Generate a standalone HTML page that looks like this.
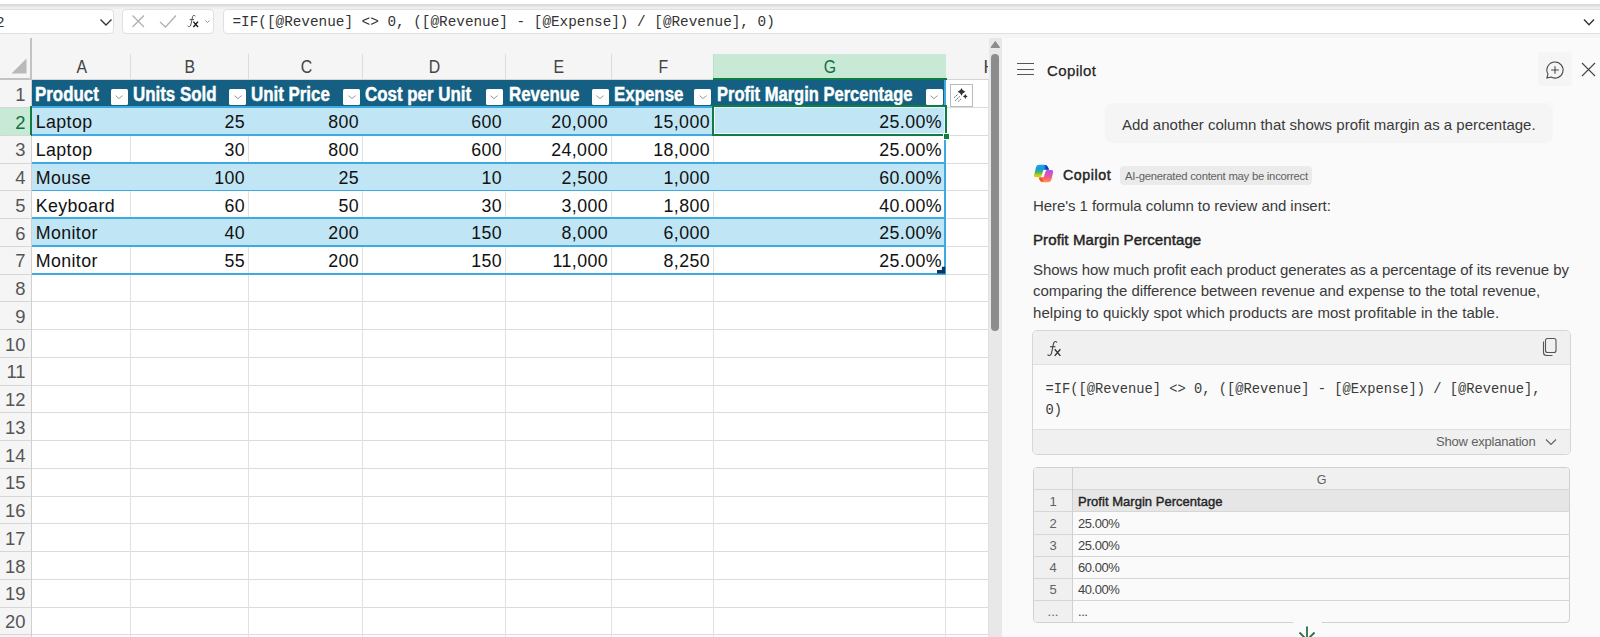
<!DOCTYPE html>
<html lang="en"><head><meta charset="utf-8"><title>Excel Copilot</title>
<style>
*{box-sizing:border-box;margin:0;padding:0}
html,body{width:1600px;height:637px;overflow:hidden;background:#f5f5f5;font-family:"Liberation Sans",sans-serif}
.abs,.abs *{position:absolute}
#root{position:relative;width:1600px;height:637px;overflow:hidden}
#root div,#root span,#root svg{position:absolute}
.topwhite{left:0;top:0;width:1600px;height:4px;background:#fff}
.topline{left:0;top:3.8px;width:1600px;height:5.6px;background:linear-gradient(#dadada 0,#dedede 42%,#ececec 55%,#efefef 100%)}
.box{background:#fff;border:1px solid #e0e0e0;border-radius:4px;top:9px;height:25px}
.ftext{left:232.5px;top:12px;height:21px;line-height:21px;font-family:"Liberation Mono",monospace;font-size:14.35px;color:#333;white-space:pre}
.colh{top:54px;height:24px;line-height:26px;text-align:center;font-size:17.6px;color:#444;padding-left:2.5px}
.colh span{position:static!important;display:inline-block;transform:scaleX(.9)}
.rowh{left:0;width:31px;text-align:right;padding-right:5.5px;font-size:18.4px;color:#555;height:27px;line-height:28px;margin-top:.8px}
.vl{width:1px;background:#e1e1e1}
.hl{height:1px;background:#e1e1e1}
.cell{font-size:17.8px;color:#111;height:26px;line-height:28px;white-space:nowrap;letter-spacing:.4px;margin-top:.6px}
.hd{font-size:19.6px;font-weight:bold;color:#fff;white-space:nowrap;height:26px;line-height:27px;transform-origin:0 50%;transform:scaleX(.862);-webkit-text-stroke:.45px #fff;margin-top:-.2px}
.fb{width:17px;height:16.6px;background:#fff;border-radius:1.5px;top:88.5px}
#panel{left:1002px;top:34px;width:598px;height:603px;background:#fafafa;font-family:"Liberation Sans",sans-serif;color:#333}
.pt{white-space:nowrap;font-size:14.6px;color:#3a3a3a;line-height:20px;height:20px;margin-top:.6px}
</style></head><body><div id="root">
<div class="topwhite"></div><div class="topline"></div>

<div class="box" style="left:-6px;width:120px"></div>
<span style="left:-4px;top:11px;font-size:15px;line-height:21px;color:#333">2</span>
<svg style="left:98.5px;top:17.3px" width="14" height="10" viewBox="0 0 14 10"><path d="M1.5 2.5 L7 8 L12.5 2.5" fill="none" stroke="#333" stroke-width="1.4"/></svg>
<div class="box" style="left:122px;width:92px"></div>
<svg style="left:130px;top:13px" width="84" height="17" viewBox="0 0 84 17"><path d="M2.5 2.5 L14 14 M14 2.5 L2.5 14" stroke="#b0b0b0" stroke-width="1.3" fill="none"/><path d="M30 9 L35.5 14 L46 2.5" stroke="#b0b0b0" stroke-width="1.3" fill="none"/><path d="M75.5 7.5 L77.5 9.5 L79.5 7.5" stroke="#9a9a9a" stroke-width="1" fill="none"/></svg>
<svg style="left:186px;top:13px" width="14" height="16" viewBox="186 13 14 16"><path d="M195.2 16.3 C195 15.2 193.2 14.8 192.6 16.6 L190.8 25 C190.4 26.9 188.6 27 187.6 26" fill="none" stroke="#555" stroke-width="1"/><path d="M189.6 19.6 H194" stroke="#555" stroke-width="1" fill="none"/><path d="M193.4 21.6 L198 27 M198 21.6 L193.4 27" stroke="#1a1a1a" stroke-width="1.4" fill="none"/></svg>
<div class="box" style="left:223px;width:1384px"></div>
<span class="ftext">=IF([@Revenue] &lt;&gt; 0, ([@Revenue] - [@Expense]) / [@Revenue], 0)</span>
<svg style="left:1581.8px;top:16.8px" width="14" height="10" viewBox="0 0 14 10"><path d="M2 2.5 L7 7.7 L12 2.5" fill="none" stroke="#333" stroke-width="1.4"/></svg>
<div style="left:32px;top:80px;width:957px;height:557px;background:#fff"></div>
<div style="left:30px;top:38px;width:2px;height:42px;background:#c3c3c3"></div>
<div style="left:0;top:78px;width:32px;height:2px;background:#c3c3c3"></div>
<svg style="left:11px;top:58px" width="16" height="16" viewBox="0 0 16 16"><path d="M15.5 0.5 L15.5 15.5 L0.5 15.5 Z" fill="#b9b9b9"/></svg>
<div style="left:32px;top:79px;width:957px;height:1px;background:#d4d4d4"></div>
<div class="colh" style="left:32px;width:98px"><span>A</span></div>
<div class="colh" style="left:130px;width:118px"><span>B</span></div>
<div class="vl" style="left:130px;top:54px;height:25px;background:#dcdcdc"></div>
<div class="colh" style="left:248px;width:114px"><span>C</span></div>
<div class="vl" style="left:248px;top:54px;height:25px;background:#dcdcdc"></div>
<div class="colh" style="left:362px;width:143px"><span>D</span></div>
<div class="vl" style="left:362px;top:54px;height:25px;background:#dcdcdc"></div>
<div class="colh" style="left:505px;width:106px"><span>E</span></div>
<div class="vl" style="left:505px;top:54px;height:25px;background:#dcdcdc"></div>
<div class="colh" style="left:611px;width:102px"><span>F</span></div>
<div class="vl" style="left:611px;top:54px;height:25px;background:#dcdcdc"></div>
<div style="left:713px;top:54px;width:233px;height:24px;background:#c9e9d7"></div>
<div style="left:713px;top:54px;width:1px;height:24px;background:#b9e0cb"></div>
<div style="left:713px;top:78px;width:234px;height:2px;background:#107c41"></div>
<div class="colh" style="left:713px;width:232px;color:#0e703a"><span>G</span></div>
<div style="left:984px;top:54px;width:4.4px;height:24px;overflow:hidden"><span style="left:-.5px;top:0;font-size:17.6px;line-height:26px;color:#444">H</span></div>
<div style="left:31px;top:80px;width:1px;height:557px;background:#d0d0d0"></div>
<div class="rowh" style="top:80.0px;">1</div>
<div class="hl" style="left:0;top:107.15px;width:31px;background:#d6d6d6"></div>
<div style="left:0;top:107.75px;width:30px;height:27.75px;background:#c9e9d7"></div>
<div style="left:30px;top:105.75px;width:2px;height:29.75px;background:#107c41"></div>
<div class="rowh" style="top:107.75px;color:#0e703a;">2</div>
<div class="hl" style="left:0;top:134.90px;width:31px;background:#d6d6d6"></div>
<div class="rowh" style="top:135.5px;">3</div>
<div class="hl" style="left:0;top:162.65px;width:31px;background:#d6d6d6"></div>
<div class="rowh" style="top:163.25px;">4</div>
<div class="hl" style="left:0;top:190.40px;width:31px;background:#d6d6d6"></div>
<div class="rowh" style="top:191.0px;">5</div>
<div class="hl" style="left:0;top:218.15px;width:31px;background:#d6d6d6"></div>
<div class="rowh" style="top:218.75px;">6</div>
<div class="hl" style="left:0;top:245.90px;width:31px;background:#d6d6d6"></div>
<div class="rowh" style="top:246.5px;">7</div>
<div class="hl" style="left:0;top:273.65px;width:31px;background:#d6d6d6"></div>
<div class="rowh" style="top:274.25px;">8</div>
<div class="hl" style="left:0;top:301.40px;width:31px;background:#d6d6d6"></div>
<div class="rowh" style="top:302.0px;">9</div>
<div class="hl" style="left:0;top:329.15px;width:31px;background:#d6d6d6"></div>
<div class="rowh" style="top:329.75px;">10</div>
<div class="hl" style="left:0;top:356.90px;width:31px;background:#d6d6d6"></div>
<div class="rowh" style="top:357.5px;">11</div>
<div class="hl" style="left:0;top:384.65px;width:31px;background:#d6d6d6"></div>
<div class="rowh" style="top:385.25px;">12</div>
<div class="hl" style="left:0;top:412.40px;width:31px;background:#d6d6d6"></div>
<div class="rowh" style="top:413.0px;">13</div>
<div class="hl" style="left:0;top:440.15px;width:31px;background:#d6d6d6"></div>
<div class="rowh" style="top:440.75px;">14</div>
<div class="hl" style="left:0;top:467.90px;width:31px;background:#d6d6d6"></div>
<div class="rowh" style="top:468.5px;">15</div>
<div class="hl" style="left:0;top:495.65px;width:31px;background:#d6d6d6"></div>
<div class="rowh" style="top:496.25px;">16</div>
<div class="hl" style="left:0;top:523.40px;width:31px;background:#d6d6d6"></div>
<div class="rowh" style="top:524.0px;">17</div>
<div class="hl" style="left:0;top:551.15px;width:31px;background:#d6d6d6"></div>
<div class="rowh" style="top:551.75px;">18</div>
<div class="hl" style="left:0;top:578.90px;width:31px;background:#d6d6d6"></div>
<div class="rowh" style="top:579.5px;">19</div>
<div class="hl" style="left:0;top:606.65px;width:31px;background:#d6d6d6"></div>
<div class="rowh" style="top:607.25px;">20</div>
<div class="hl" style="left:0;top:634.40px;width:31px;background:#d6d6d6"></div>
<div class="rowh" style="top:635.0px;">21</div>
<div class="hl" style="left:0;top:662.15px;width:31px;background:#d6d6d6"></div>
<div class="hl" style="left:32px;top:107.15px;width:957px;background:#dcdcdc"></div>
<div class="hl" style="left:32px;top:134.90px;width:957px;background:#dcdcdc"></div>
<div class="hl" style="left:32px;top:162.65px;width:957px;background:#dcdcdc"></div>
<div class="hl" style="left:32px;top:190.40px;width:957px;background:#dcdcdc"></div>
<div class="hl" style="left:32px;top:218.15px;width:957px;background:#dcdcdc"></div>
<div class="hl" style="left:32px;top:245.90px;width:957px;background:#dcdcdc"></div>
<div class="hl" style="left:32px;top:273.65px;width:957px;background:#dcdcdc"></div>
<div class="hl" style="left:32px;top:301.40px;width:957px;background:#dcdcdc"></div>
<div class="hl" style="left:32px;top:329.15px;width:957px;background:#dcdcdc"></div>
<div class="hl" style="left:32px;top:356.90px;width:957px;background:#dcdcdc"></div>
<div class="hl" style="left:32px;top:384.65px;width:957px;background:#dcdcdc"></div>
<div class="hl" style="left:32px;top:412.40px;width:957px;background:#dcdcdc"></div>
<div class="hl" style="left:32px;top:440.15px;width:957px;background:#dcdcdc"></div>
<div class="hl" style="left:32px;top:467.90px;width:957px;background:#dcdcdc"></div>
<div class="hl" style="left:32px;top:495.65px;width:957px;background:#dcdcdc"></div>
<div class="hl" style="left:32px;top:523.40px;width:957px;background:#dcdcdc"></div>
<div class="hl" style="left:32px;top:551.15px;width:957px;background:#dcdcdc"></div>
<div class="hl" style="left:32px;top:578.90px;width:957px;background:#dcdcdc"></div>
<div class="hl" style="left:32px;top:606.65px;width:957px;background:#dcdcdc"></div>
<div class="hl" style="left:32px;top:634.40px;width:957px;background:#dcdcdc"></div>
<div class="hl" style="left:32px;top:662.15px;width:957px;background:#dcdcdc"></div>
<div class="vl" style="left:130px;top:80px;height:557px"></div>
<div class="vl" style="left:248px;top:80px;height:557px"></div>
<div class="vl" style="left:362px;top:80px;height:557px"></div>
<div class="vl" style="left:505px;top:80px;height:557px"></div>
<div class="vl" style="left:611px;top:80px;height:557px"></div>
<div class="vl" style="left:713px;top:80px;height:557px"></div>
<div class="vl" style="left:945px;top:80px;height:557px"></div>
<div class="vl" style="left:988px;top:80px;height:557px"></div>
<div style="left:32px;top:80px;width:913px;height:27px;background:#156082"></div>
<div class="hd" style="left:35px;top:81px">Product</div>
<div class="fb" style="left:110.5px"></div>
<svg style="left:115.2px;top:95.4px" width="8" height="4.5" viewBox="0 0 8 4.5"><path d="M0.5 0.6 L4 3.6 L7.5 0.6" fill="none" stroke="#9a9a9a" stroke-width="1"/></svg>
<div class="hd" style="left:133px;top:81px">Units Sold</div>
<div class="fb" style="left:229px"></div>
<svg style="left:233.7px;top:95.4px" width="8" height="4.5" viewBox="0 0 8 4.5"><path d="M0.5 0.6 L4 3.6 L7.5 0.6" fill="none" stroke="#9a9a9a" stroke-width="1"/></svg>
<div class="hd" style="left:251px;top:81px">Unit Price</div>
<div class="fb" style="left:343.3px"></div>
<svg style="left:348.0px;top:95.4px" width="8" height="4.5" viewBox="0 0 8 4.5"><path d="M0.5 0.6 L4 3.6 L7.5 0.6" fill="none" stroke="#9a9a9a" stroke-width="1"/></svg>
<div class="hd" style="left:365px;top:81px">Cost per Unit</div>
<div class="fb" style="left:485.7px"></div>
<svg style="left:490.4px;top:95.4px" width="8" height="4.5" viewBox="0 0 8 4.5"><path d="M0.5 0.6 L4 3.6 L7.5 0.6" fill="none" stroke="#9a9a9a" stroke-width="1"/></svg>
<div class="hd" style="left:508.5px;top:81px">Revenue</div>
<div class="fb" style="left:591.5px"></div>
<svg style="left:596.2px;top:95.4px" width="8" height="4.5" viewBox="0 0 8 4.5"><path d="M0.5 0.6 L4 3.6 L7.5 0.6" fill="none" stroke="#9a9a9a" stroke-width="1"/></svg>
<div class="hd" style="left:614px;top:81px">Expense</div>
<div class="fb" style="left:694.2px"></div>
<svg style="left:698.9000000000001px;top:95.4px" width="8" height="4.5" viewBox="0 0 8 4.5"><path d="M0.5 0.6 L4 3.6 L7.5 0.6" fill="none" stroke="#9a9a9a" stroke-width="1"/></svg>
<div class="hd" style="left:717.2px;top:81px;transform:scaleX(.843)">Profit Margin Percentage</div>
<div class="fb" style="left:925.7px"></div>
<svg style="left:930.4000000000001px;top:95.4px" width="8" height="4.5" viewBox="0 0 8 4.5"><path d="M0.5 0.6 L4 3.6 L7.5 0.6" fill="none" stroke="#9a9a9a" stroke-width="1"/></svg>
<div style="left:32px;top:107.75px;width:913px;height:27.75px;background:#c0e6f5"></div>
<div class="cell" style="left:35.7px;top:107.75px">Laptop</div>
<div class="cell" style="left:130px;width:115px;top:107.75px;text-align:right">25</div>
<div class="cell" style="left:248px;width:111px;top:107.75px;text-align:right">800</div>
<div class="cell" style="left:362px;width:140px;top:107.75px;text-align:right">600</div>
<div class="cell" style="left:505px;width:103px;top:107.75px;text-align:right">20,000</div>
<div class="cell" style="left:611px;width:99px;top:107.75px;text-align:right">15,000</div>
<div class="cell" style="left:713px;width:229px;top:107.75px;text-align:right">25.00%</div>
<div style="left:32px;top:135.5px;width:913px;height:27.75px;background:#fff"></div>
<div class="vl" style="left:130px;top:135.5px;height:27.75px"></div>
<div class="vl" style="left:248px;top:135.5px;height:27.75px"></div>
<div class="vl" style="left:362px;top:135.5px;height:27.75px"></div>
<div class="vl" style="left:505px;top:135.5px;height:27.75px"></div>
<div class="vl" style="left:611px;top:135.5px;height:27.75px"></div>
<div class="vl" style="left:713px;top:135.5px;height:27.75px"></div>
<div class="cell" style="left:35.7px;top:135.5px">Laptop</div>
<div class="cell" style="left:130px;width:115px;top:135.5px;text-align:right">30</div>
<div class="cell" style="left:248px;width:111px;top:135.5px;text-align:right">800</div>
<div class="cell" style="left:362px;width:140px;top:135.5px;text-align:right">600</div>
<div class="cell" style="left:505px;width:103px;top:135.5px;text-align:right">24,000</div>
<div class="cell" style="left:611px;width:99px;top:135.5px;text-align:right">18,000</div>
<div class="cell" style="left:713px;width:229px;top:135.5px;text-align:right">25.00%</div>
<div style="left:32px;top:163.25px;width:913px;height:27.75px;background:#c0e6f5"></div>
<div class="cell" style="left:35.7px;top:163.25px">Mouse</div>
<div class="cell" style="left:130px;width:115px;top:163.25px;text-align:right">100</div>
<div class="cell" style="left:248px;width:111px;top:163.25px;text-align:right">25</div>
<div class="cell" style="left:362px;width:140px;top:163.25px;text-align:right">10</div>
<div class="cell" style="left:505px;width:103px;top:163.25px;text-align:right">2,500</div>
<div class="cell" style="left:611px;width:99px;top:163.25px;text-align:right">1,000</div>
<div class="cell" style="left:713px;width:229px;top:163.25px;text-align:right">60.00%</div>
<div style="left:32px;top:191.0px;width:913px;height:27.75px;background:#fff"></div>
<div class="vl" style="left:130px;top:191.0px;height:27.75px"></div>
<div class="vl" style="left:248px;top:191.0px;height:27.75px"></div>
<div class="vl" style="left:362px;top:191.0px;height:27.75px"></div>
<div class="vl" style="left:505px;top:191.0px;height:27.75px"></div>
<div class="vl" style="left:611px;top:191.0px;height:27.75px"></div>
<div class="vl" style="left:713px;top:191.0px;height:27.75px"></div>
<div class="cell" style="left:35.7px;top:191.0px">Keyboard</div>
<div class="cell" style="left:130px;width:115px;top:191.0px;text-align:right">60</div>
<div class="cell" style="left:248px;width:111px;top:191.0px;text-align:right">50</div>
<div class="cell" style="left:362px;width:140px;top:191.0px;text-align:right">30</div>
<div class="cell" style="left:505px;width:103px;top:191.0px;text-align:right">3,000</div>
<div class="cell" style="left:611px;width:99px;top:191.0px;text-align:right">1,800</div>
<div class="cell" style="left:713px;width:229px;top:191.0px;text-align:right">40.00%</div>
<div style="left:32px;top:218.75px;width:913px;height:27.75px;background:#c0e6f5"></div>
<div class="cell" style="left:35.7px;top:218.75px">Monitor</div>
<div class="cell" style="left:130px;width:115px;top:218.75px;text-align:right">40</div>
<div class="cell" style="left:248px;width:111px;top:218.75px;text-align:right">200</div>
<div class="cell" style="left:362px;width:140px;top:218.75px;text-align:right">150</div>
<div class="cell" style="left:505px;width:103px;top:218.75px;text-align:right">8,000</div>
<div class="cell" style="left:611px;width:99px;top:218.75px;text-align:right">6,000</div>
<div class="cell" style="left:713px;width:229px;top:218.75px;text-align:right">25.00%</div>
<div style="left:32px;top:246.5px;width:913px;height:27.75px;background:#fff"></div>
<div class="vl" style="left:130px;top:246.5px;height:27.75px"></div>
<div class="vl" style="left:248px;top:246.5px;height:27.75px"></div>
<div class="vl" style="left:362px;top:246.5px;height:27.75px"></div>
<div class="vl" style="left:505px;top:246.5px;height:27.75px"></div>
<div class="vl" style="left:611px;top:246.5px;height:27.75px"></div>
<div class="vl" style="left:713px;top:246.5px;height:27.75px"></div>
<div class="cell" style="left:35.7px;top:246.5px">Monitor</div>
<div class="cell" style="left:130px;width:115px;top:246.5px;text-align:right">55</div>
<div class="cell" style="left:248px;width:111px;top:246.5px;text-align:right">200</div>
<div class="cell" style="left:362px;width:140px;top:246.5px;text-align:right">150</div>
<div class="cell" style="left:505px;width:103px;top:246.5px;text-align:right">11,000</div>
<div class="cell" style="left:611px;width:99px;top:246.5px;text-align:right">8,250</div>
<div class="cell" style="left:713px;width:229px;top:246.5px;text-align:right">25.00%</div>
<div style="left:32px;top:106.45px;width:913.8px;height:1.8px;background:#3dabe2"></div>
<div style="left:32px;top:134.20px;width:913.8px;height:1.8px;background:#3dabe2"></div>
<div style="left:32px;top:161.95px;width:913.8px;height:1.8px;background:#3dabe2"></div>
<div style="left:32px;top:189.70px;width:913.8px;height:1.8px;background:#3dabe2"></div>
<div style="left:32px;top:217.45px;width:913.8px;height:1.8px;background:#3dabe2"></div>
<div style="left:32px;top:245.20px;width:913.8px;height:1.8px;background:#3dabe2"></div>
<div style="left:32px;top:272.95px;width:913.8px;height:1.8px;background:#3dabe2"></div>
<div style="left:943.8px;top:80px;width:2px;height:194.25px;background:#3dabe2"></div>
<div style="left:712px;top:105px;width:235px;height:31.2px;border:2.2px solid #107c41;box-shadow:inset 0 0 0 1px rgba(255,255,255,.85)"></div>
<div style="left:943px;top:132.5px;width:7px;height:7px;background:#107c41;border:1px solid #fff"></div>
<svg style="left:936px;top:265px" width="11" height="10" viewBox="936 265 11 10"><path d="M937 270 H941.9 V266.8 H945.2 V273.6 H937 Z" fill="#0b3563"/></svg>
<div style="left:950px;top:84px;width:23px;height:23px;background:#fff;border:1px solid #b8bcc0"></div>
<svg style="left:950px;top:84px" width="23" height="23" viewBox="950 84 23 23"><path d="M961.50 87.90 Q962.36 90.94 965.40 91.80 Q962.36 92.66 961.50 95.70 Q960.64 92.66 957.60 91.80 Q960.64 90.94 961.50 87.90 Z" fill="#333"/><path d="M965.30 94.10 Q965.83 95.97 967.70 96.50 Q965.83 97.03 965.30 98.90 Q964.77 97.03 962.90 96.50 Q964.77 95.97 965.30 94.10 Z" fill="#333"/><path d="M954.2 97.7 L958 94.1 M955.2 100.7 L959.9 96.3 M958.2 101.5 L961 98.9" stroke="#444" stroke-width=".9" stroke-dasharray="1.8 .9" fill="none"/></svg>
<div style="left:988.5px;top:37.5px;width:13.5px;height:600px;background:#e8e8e8"></div>
<svg style="left:989.5px;top:40px" width="11" height="9" viewBox="0 0 11 9"><path d="M1 7.5 L5.3 1.4 L9.6 7.5 Z" fill="#8c8c8c" stroke="#8c8c8c" stroke-width="1" stroke-linejoin="round"/></svg>
<div style="left:991px;top:54px;width:7.6px;height:276.5px;background:#8c8c8c;border-radius:4px"></div>
<div style="left:1002px;top:38px;width:598px;height:599px;background:#fafafa"></div>
<div style="left:1017px;top:63px;width:17px;height:1px;background:#555"></div>
<div style="left:1017px;top:69px;width:17px;height:1px;background:#555"></div>
<div style="left:1017px;top:74px;width:17px;height:1px;background:#555"></div>
<div class="pt" style="left:1047px;top:60px;font-size:15px;letter-spacing:.38px;color:#242424;-webkit-text-stroke:.25px #242424">Copilot</div>
<div style="left:1538px;top:52px;width:34px;height:34px;background:#f5f5f5;border-radius:4px"></div>
<svg style="left:1544.5px;top:59.5px" width="20" height="20" viewBox="0 0 21 21"><path d="M10.5 2 A8.5 8.5 0 1 1 6.3 17.9 L2 19 L3.1 14.7 A8.5 8.5 0 0 1 10.5 2 Z" fill="none" stroke="#444" stroke-width="1.1"/><path d="M10.5 6.5 V14.5 M6.5 10.5 H14.5" stroke="#444" stroke-width="1.1" fill="none"/></svg>
<svg style="left:1581px;top:62px" width="15" height="15" viewBox="0 0 15 15"><path d="M1 1 L14 14 M14 1 L1 14" stroke="#444" stroke-width="1.1" fill="none"/></svg>
<div style="left:1105px;top:103px;width:448px;height:40px;background:#f5f5f5;border-radius:8px"></div>
<div class="pt" style="left:1122px;top:114px;font-size:15px">Add another column that shows profit margin as a percentage.</div>
<svg style="left:1028px;top:160px" width="32" height="28" viewBox="0 0 32 28">
<defs>
<linearGradient id="g1" gradientUnits="userSpaceOnUse" x1="0" y1="4.7" x2="0" y2="17.3"><stop offset="0" stop-color="#18a8f4"/><stop offset=".3" stop-color="#1a98de"/><stop offset=".58" stop-color="#3cb56c"/><stop offset=".82" stop-color="#c8cc18"/><stop offset="1" stop-color="#f2c800"/></linearGradient>
<linearGradient id="g2" gradientUnits="userSpaceOnUse" x1="0" y1="10.1" x2="0" y2="22.3"><stop offset="0" stop-color="#a45cf6"/><stop offset=".35" stop-color="#dc50b4"/><stop offset=".65" stop-color="#f6607e"/><stop offset="1" stop-color="#ff9a3c"/></linearGradient>
<linearGradient id="g3" gradientUnits="userSpaceOnUse" x1="15.5" y1="0" x2="18.5" y2="0"><stop offset="0" stop-color="#1238c4" stop-opacity="0"/><stop offset="1" stop-color="#1238c4"/></linearGradient>
<linearGradient id="g4" gradientUnits="userSpaceOnUse" x1="15.8" y1="0" x2="13.4" y2="0"><stop offset="0" stop-color="#f2521e" stop-opacity="0"/><stop offset="1" stop-color="#f2521e"/></linearGradient>
<clipPath id="cl"><path d="M8.02 7.13 Q8.60 4.70 11.10 4.70 L16.30 4.70 Q18.80 4.70 19.86 6.96 L20.69 8.71 Q21.20 9.80 20.00 9.80 L16.20 9.80 Q15.40 9.80 15.17 10.57 L13.62 15.86 Q13.20 17.30 11.70 17.30 L8.10 17.30 Q5.60 17.30 6.18 14.87 Z"/></clipPath>
<clipPath id="cr"><path d="M17.54 11.53 Q18.00 10.10 19.50 10.10 L23.10 10.10 Q25.60 10.10 25.04 12.54 L23.36 19.86 Q22.80 22.30 20.30 22.30 L15.30 22.30 Q12.80 22.30 11.76 20.03 L11.10 18.59 Q10.60 17.50 11.80 17.50 L14.80 17.50 Q15.60 17.50 15.85 16.74 Z"/></clipPath>
</defs>
<g clip-path="url(#cr)"><rect x="0" y="0" width="32" height="28" fill="url(#g2)"/><path d="M9 17 H17 L15.8 23 H9 Z" fill="url(#g4)"/></g>
<g clip-path="url(#cl)"><rect x="0" y="0" width="32" height="28" fill="url(#g1)"/><path d="M15.5 4 H23 V10.2 H15.5 Z" fill="url(#g3)"/></g>
</svg>
<div class="pt" style="left:1063px;top:164px;font-size:14.2px;letter-spacing:.6px;color:#242424;-webkit-text-stroke:.45px #242424">Copilot</div>
<div style="left:1120px;top:166px;width:192px;height:19px;background:#ebebeb;border-radius:4px"></div>
<div class="pt" style="left:1125px;top:166px;font-size:11.3px;letter-spacing:-.25px;color:#616161;line-height:19px;height:19px">AI-generated content may be incorrect</div>
<div class="pt" style="left:1033px;top:195px;font-size:15px;letter-spacing:-.06px">Here&#39;s 1 formula column to review and insert:</div>
<div class="pt" style="left:1033px;top:229px;font-size:15px;letter-spacing:.1px;color:#242424;-webkit-text-stroke:.45px #242424">Profit Margin Percentage</div>
<div class="pt" style="left:1033px;top:259.4px;font-size:15px;letter-spacing:-.09px">Shows how much profit each product generates as a percentage of its revenue by</div>
<div class="pt" style="left:1033px;top:280.5px;font-size:15px;letter-spacing:-.05px">comparing the difference between revenue and expense to the total revenue,</div>
<div class="pt" style="left:1033px;top:302px;font-size:15px;letter-spacing:.06px">helping to quickly spot which products are most profitable in the table.</div>
<div style="left:1032px;top:330px;width:539px;height:125px;background:#fafafa;border:1px solid #d6d6d6;border-radius:5px;overflow:hidden"><div style="left:0;top:0;width:537px;height:34px;background:#f0f0f0;border-bottom:1px solid #e0e0e0"></div><div style="left:0;top:98px;width:537px;height:25px;background:#f0f0f0;border-top:1px solid #e0e0e0"></div></div>
<svg style="left:1045.3px;top:337.5px" width="17.4" height="19.3" viewBox="185.6 12.6 14 15.5"><path d="M195.2 16.3 C195 15.2 193.2 14.8 192.6 16.6 L190.8 25 C190.4 26.9 188.6 27 187.6 26" fill="none" stroke="#444" stroke-width=".9"/><path d="M189.6 19.6 H194" stroke="#444" stroke-width=".9" fill="none"/><path d="M193.4 21.6 L198 27 M198 21.6 L193.4 27" stroke="#333" stroke-width="1.1" fill="none"/></svg>
<svg style="left:1542px;top:337px" width="16" height="20" viewBox="0 0 16 20"><rect x="3.5" y="1.5" width="10.5" height="14" rx="2" fill="none" stroke="#555" stroke-width="1.1"/><path d="M1.5 4.5 V15.5 A3 3 0 0 0 4.5 18.5 H10.5" fill="none" stroke="#555" stroke-width="1.1"/></svg>
<div style="left:1045.5px;top:378.9px;font-family:'Liberation Mono',monospace;font-size:13.75px;line-height:21.3px;color:#3a3a3a;white-space:pre">=IF([@Revenue] &lt;&gt; 0, ([@Revenue] - [@Expense]) / [@Revenue],
0)</div>
<div class="pt" style="left:1436px;top:431px;font-size:13px;letter-spacing:-.2px;color:#616161">Show explanation</div>
<svg style="left:1545px;top:438px" width="12" height="8" viewBox="0 0 12 8"><path d="M1 1.5 L6 6.5 L11 1.5" fill="none" stroke="#616161" stroke-width="1.1"/></svg>
<div style="left:1033px;top:467px;width:537px;height:156px;background:#fafafa;border:1px solid #d0d0d0;border-radius:4px;overflow:hidden"><div style="left:0;top:0;width:39px;height:156px;background:#f0f0f0"></div><div style="left:0;top:0;width:538px;height:21px;background:#f0f0f0"></div><div style="left:39px;top:21px;width:499px;height:23px;background:#e6e6e6"></div></div>
<div style="left:1034px;top:489px;width:536px;height:1px;background:#d6d6d6"></div>
<div style="left:1034px;top:511px;width:536px;height:1px;background:#d6d6d6"></div>
<div style="left:1034px;top:534px;width:536px;height:1px;background:#d6d6d6"></div>
<div style="left:1034px;top:556px;width:536px;height:1px;background:#d6d6d6"></div>
<div style="left:1034px;top:578px;width:536px;height:1px;background:#d6d6d6"></div>
<div style="left:1034px;top:600px;width:536px;height:1px;background:#d6d6d6"></div>
<div style="left:1072px;top:468px;width:1px;height:154px;background:#d0d0d0"></div>
<div class="pt" style="left:1073px;top:469px;width:497px;text-align:center;font-size:12.5px;color:#616161">G</div>
<div class="pt" style="left:1034px;top:491.4px;width:38px;text-align:center;font-size:13px;color:#616161">1</div>
<div class="pt" style="left:1078px;top:491.4px;font-size:13px;letter-spacing:.03px;color:#242424;-webkit-text-stroke:.4px #242424">Profit Margin Percentage</div>
<div class="pt" style="left:1034px;top:513.0px;width:38px;text-align:center;font-size:13px;color:#616161">2</div>
<div class="pt" style="left:1078px;top:513.0px;font-size:13px;letter-spacing:-.45px;color:#424242">25.00%</div>
<div class="pt" style="left:1034px;top:535.6999999999999px;width:38px;text-align:center;font-size:13px;color:#616161">3</div>
<div class="pt" style="left:1078px;top:535.6999999999999px;font-size:13px;letter-spacing:-.45px;color:#424242">25.00%</div>
<div class="pt" style="left:1034px;top:557.6999999999999px;width:38px;text-align:center;font-size:13px;color:#616161">4</div>
<div class="pt" style="left:1078px;top:557.6999999999999px;font-size:13px;letter-spacing:-.45px;color:#424242">60.00%</div>
<div class="pt" style="left:1034px;top:579.6999999999999px;width:38px;text-align:center;font-size:13px;color:#616161">5</div>
<div class="pt" style="left:1078px;top:579.6999999999999px;font-size:13px;letter-spacing:-.45px;color:#424242">40.00%</div>
<div class="pt" style="left:1034px;top:601.6999999999999px;width:38px;text-align:center;font-size:13px;color:#616161">...</div>
<div class="pt" style="left:1078px;top:601.6999999999999px;font-size:13px;letter-spacing:-.45px;color:#424242">...</div>
<div style="left:1292px;top:620px;width:30.5px;height:17px;border-radius:6px 6px 0 0;background:#fafafa"></div>
<svg style="left:1297px;top:626px" width="20" height="14" viewBox="0 0 20 14"><path d="M10 0.5 V14 M2.5 6.5 L10 14 L17.5 6.5" fill="none" stroke="#217346" stroke-width="1.8"/></svg>
</div></body></html>
